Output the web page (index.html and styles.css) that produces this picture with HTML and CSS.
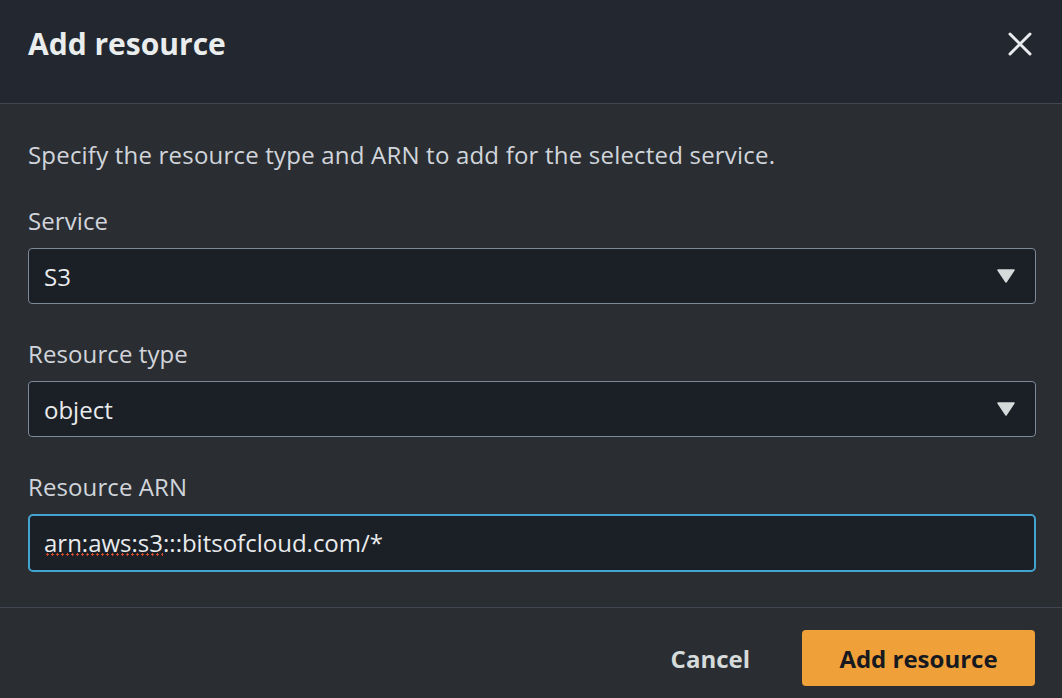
FILE: index.html
```html
<!DOCTYPE html>
<html>
<head>
<meta charset="utf-8">
<link rel="stylesheet" href="styles.css">
</head>
<body>
<div class="modal">
  <header class="modal-header">
    <h1 class="title">Add resource</h1>
    <button class="close" aria-label="Close">
      <svg width="24" height="24" viewBox="0 0 24 24"><path d="M2 2 L22 22 M22 2 L2 22" stroke="#e9ebed" stroke-width="3" stroke-linecap="round" fill="none"/></svg>
    </button>
  </header>
  <section class="modal-body">
    <p class="desc">Specify the resource type and ARN to add for the selected service.</p>
    <div class="field">
      <label class="label">Service</label>
      <div class="select">
        <span>S3</span>
        <svg class="caret" width="18" height="14" viewBox="0 0 18 14"><path d="M1 1 H17 L9 13 Z" fill="#d5dbdb" stroke="#d5dbdb" stroke-width="1.5" stroke-linejoin="round"/></svg>
      </div>
    </div>
    <div class="field">
      <label class="label">Resource type</label>
      <div class="select">
        <span>object</span>
        <svg class="caret" width="18" height="14" viewBox="0 0 18 14"><path d="M1 1 H17 L9 13 Z" fill="#d5dbdb" stroke="#d5dbdb" stroke-width="1.5" stroke-linejoin="round"/></svg>
      </div>
    </div>
    <div class="field">
      <label class="label">Resource ARN</label>
      <div class="input"><span class="misspelt">arn:aws:s3</span>:::bitsofcloud.com/*</div>
    </div>
  </section>
  <footer class="modal-footer">
    <button class="btn-link">Cancel</button>
    <button class="btn-primary">Add resource</button>
  </footer>
</div>
</body>
</html>
```
FILE: styles.css
```css
* { box-sizing: border-box; }
html, body { margin: 0; padding: 0; }
body {
  background: #2a2e33;
  font-family: "Open Sans", "Noto Sans", sans-serif;
  color: #d1d5db;
  width: 1062px;
  height: 698px;
  overflow: hidden;
}
.modal { display: flex; flex-direction: column; height: 698px; }
.modal-header {
  height: 104px;
  flex: none;
  background: #232730;
  border-bottom: 1px solid #414750;
  display: flex;
  align-items: center;
  justify-content: space-between;
  padding: 0 28px 16px 28px;
}
.title {
  margin: 0;
  font-size: 30px;
  font-weight: 700;
  color: #eaeded;
  letter-spacing: 0;
}
.close {
  background: none;
  border: 0;
  padding: 0;
  width: 24px;
  height: 24px;
  margin-right: 2px;
  display: flex;
}
.modal-body {
  flex: none;
  padding: 36px 26px 35px 28px;
  border-bottom: 1px solid #414750;
}
.desc {
  margin: 0 0 36px 0;
  font-size: 24px;
  line-height: 30px;
  letter-spacing: 0.2px;
  color: #d1d5db;
}
.field { margin-bottom: 35px; }
.field:last-child { margin-bottom: 0; }
.label {
  display: block;
  font-size: 24px;
  line-height: 30px;
  letter-spacing: 0.1px;
  color: #d1d5db;
  margin-bottom: 12px;
}
.select {
  height: 56px;
  background: #1b1f26;
  border: 1px solid #7d8998;
  border-radius: 4px;
  display: flex;
  align-items: center;
  justify-content: space-between;
  padding: 0 20px 0 15px;
  font-size: 24px;
  color: #e9ebed;
}
.input {
  height: 58px;
  background: #1b1f26;
  border: 2px solid #44a3d0;
  border-radius: 5px;
  padding: 0 14px;
  font-size: 24px;
  line-height: 54px;
  color: #e9ebed;
}
.misspelt {
  background-image: radial-gradient(circle, #d4492e 1px, transparent 1.3px);
  background-size: 5px 3px;
  background-repeat: repeat-x;
  background-position: 1px calc(100% - 3px);
}
.modal-footer {
  flex: 1;
  display: flex;
  align-items: flex-start;
  justify-content: flex-end;
  padding: 22px 27px 0 0;
  gap: 52px;
}
.btn-link {
  background: none;
  border: 0;
  font-family: inherit;
  font-size: 24px;
  font-weight: 700;
  color: #d5dbdb;
  padding: 0;
  height: 56px;
}
.btn-primary {
  width: 233px;
  height: 56px;
  background: #f0a038;
  border: 0;
  border-radius: 4px;
  font-family: inherit;
  font-size: 24px;
  font-weight: 700;
  color: #16191f;
}
```
